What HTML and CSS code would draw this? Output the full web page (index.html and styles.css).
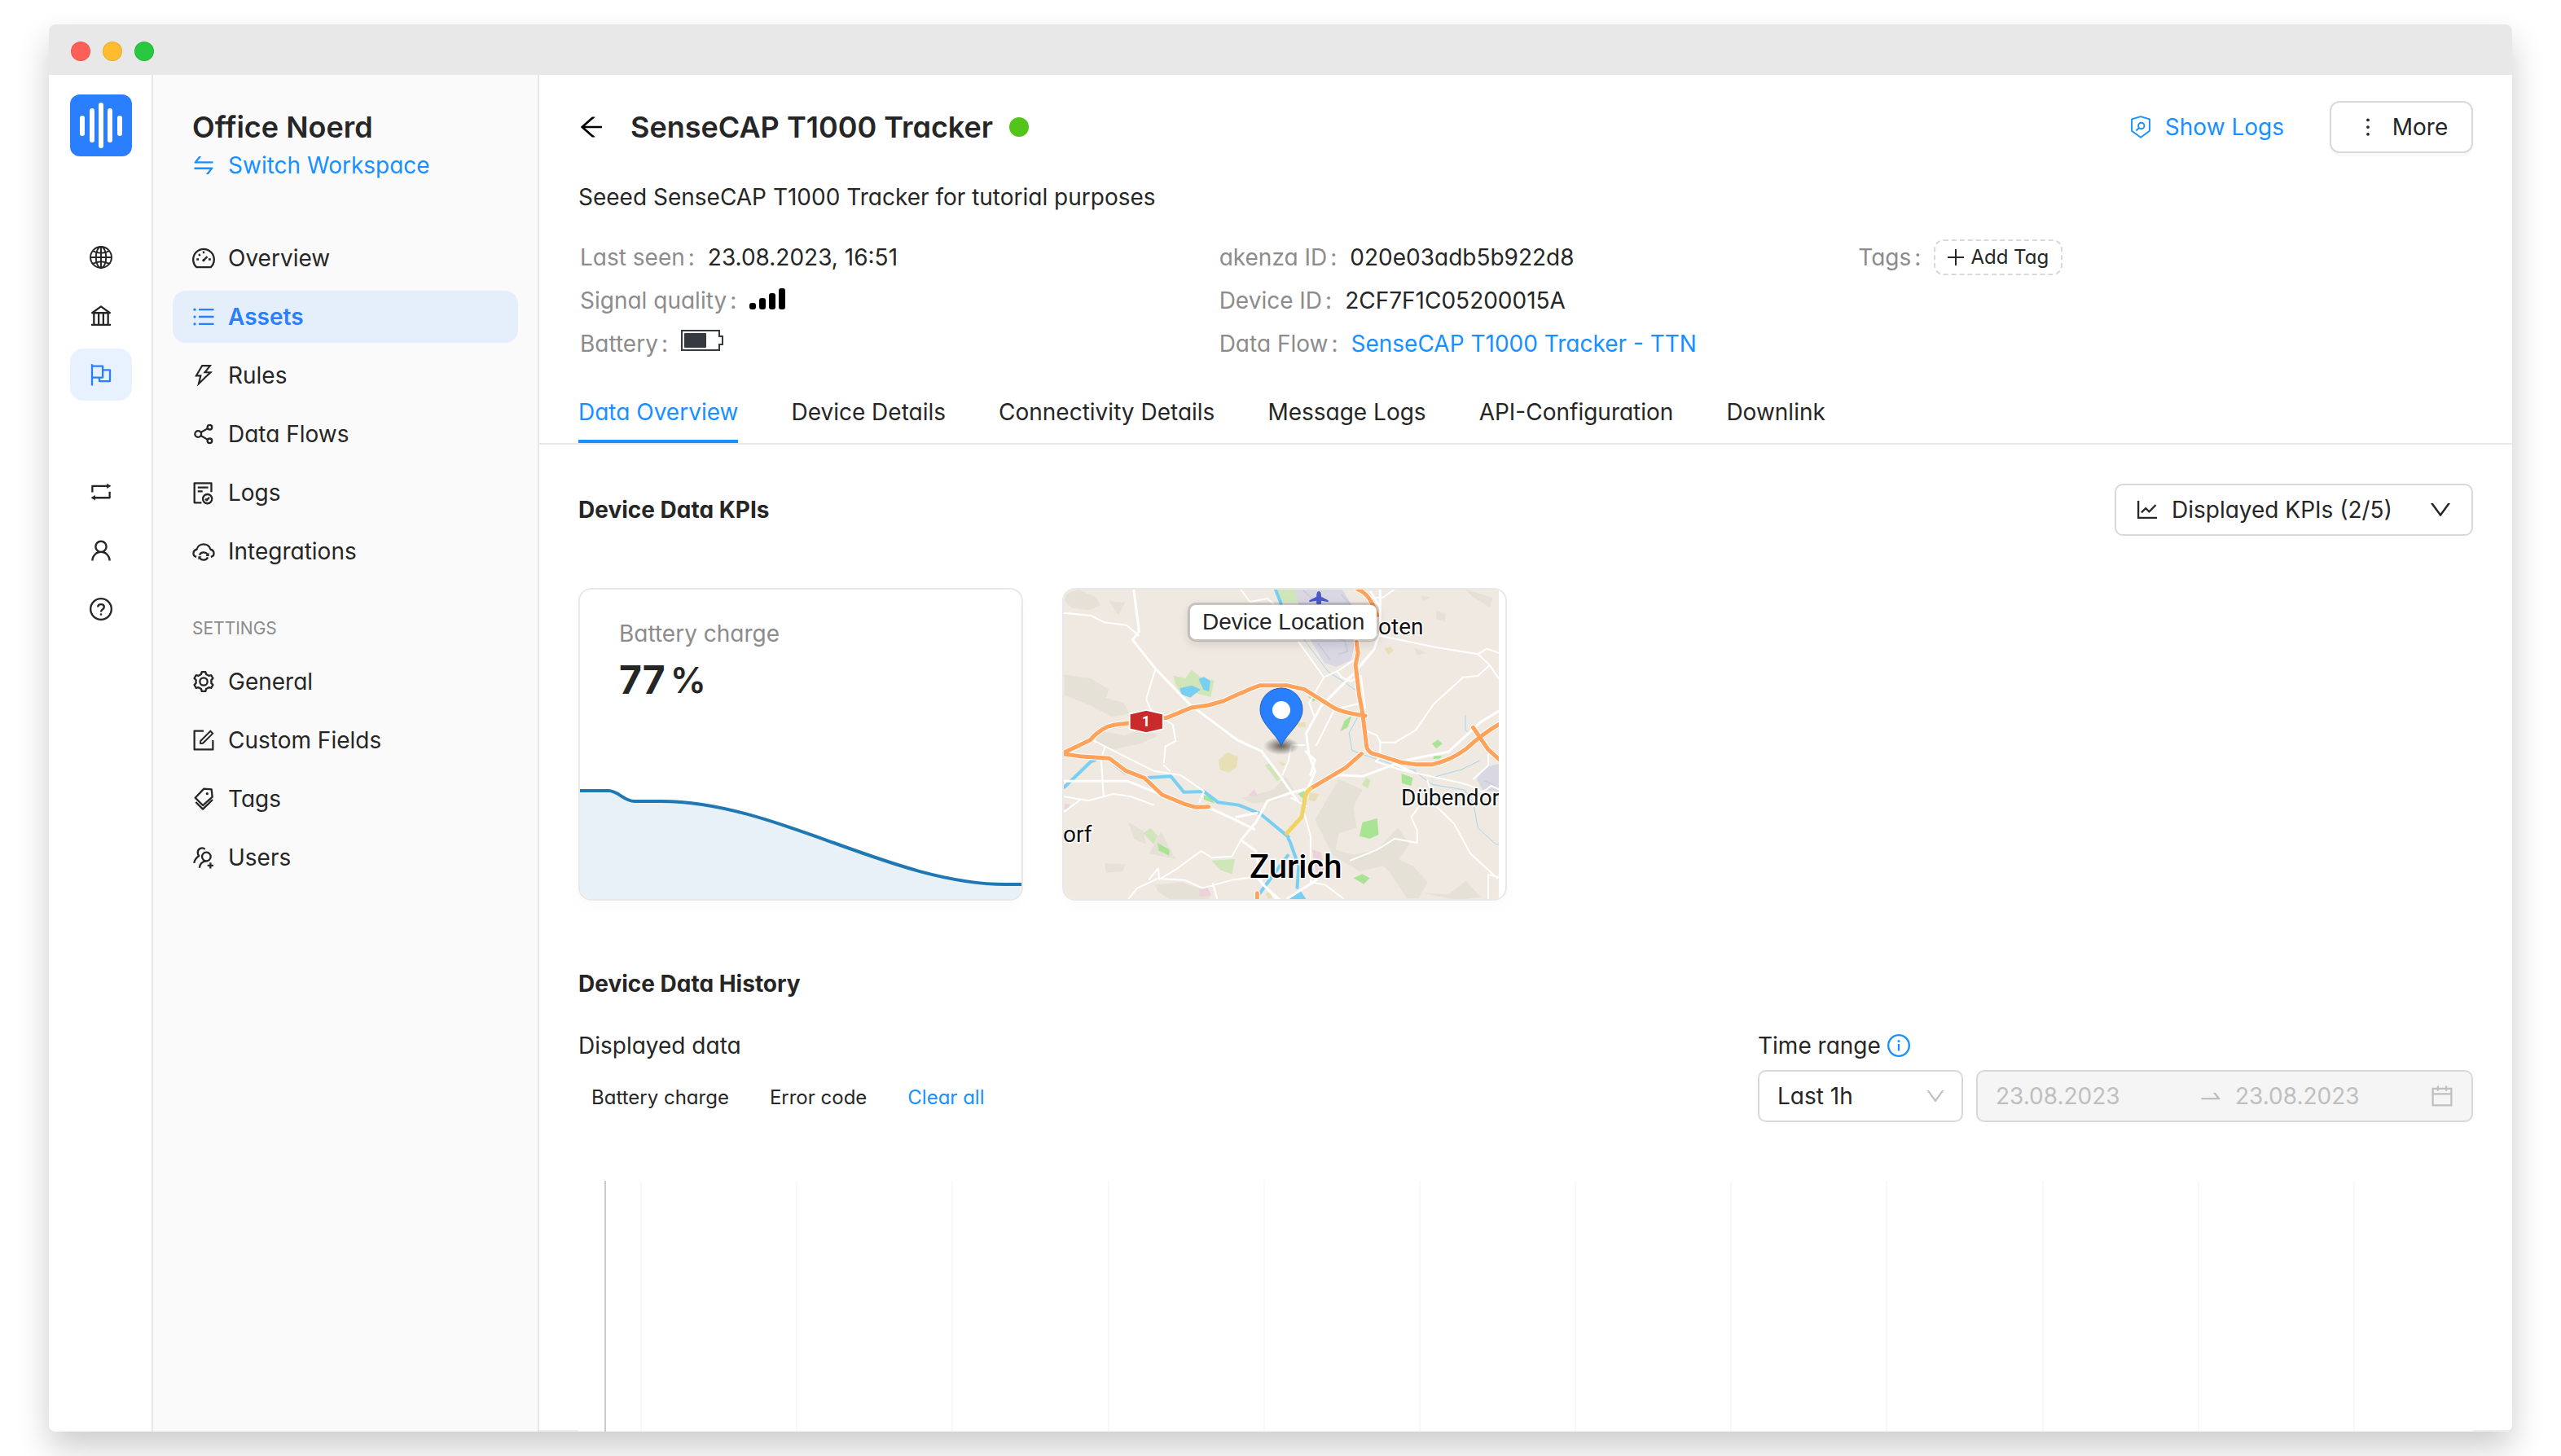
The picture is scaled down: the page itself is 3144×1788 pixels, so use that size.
FILE: index.html
```html
<!DOCTYPE html>
<html lang="en">
<head>
<meta charset="utf-8">
<title>SenseCAP T1000 Tracker</title>
<meta name="viewport" content="width=device-width, initial-scale=1">
<link rel="stylesheet" href="styles.css">
</head>
<body>
<div class="window">
  <div class="titlebar">
    <span class="light light-close"></span>
    <span class="light light-min"></span>
    <span class="light light-max"></span>
  </div>
  <div class="app">
    <nav class="rail" aria-label="Organization">
      <a class="logo" href="#" aria-label="Home">
        <svg viewBox="0 0 76 76" fill="none" stroke="#fff" stroke-width="6" stroke-linecap="round"><path d="M15 29v19M27 20v36M38 13v50M49 20v36M61 29v19"/></svg>
      </a>
      <a class="rail-item" href="#" aria-label="Public"><svg class="icon" viewBox="0 0 1024 1024"><g class="line thin"><circle cx="512" cy="512" r="415"/><ellipse cx="512" cy="512" rx="200" ry="415"/><path d="M512 97v830M97 512h830M185 260q327 170 654 0M185 764q327-170 654 0"/></g></svg></a>
      <a class="rail-item" href="#" aria-label="Organization"><svg class="icon" viewBox="0 0 1024 1024"><g class="line"><path d="M165 392L512 140l347 252zM235 400v440M420 400v440M604 400v440M789 400v440M125 860h774"/></g></svg></a>
      <a class="rail-item rail-active" href="#" aria-label="Workspaces"><svg class="icon" viewBox="0 0 1024 1024"><g class="line"><path d="M160 100v840M160 180h420v450H160M580 330h284v440H450V630"/></g></svg></a>
      <a class="rail-item rail-gap" href="#" aria-label="Switch"><svg class="icon" viewBox="0 0 1024 1024"><g class="line"><path d="M172 530V282h590M852 500v244H262"/></g><path d="M740 180l170 102-170 102zM284 642L114 744l170 102z"/></svg></a>
      <a class="rail-item" href="#" aria-label="Profile"><svg class="icon" viewBox="0 0 1024 1024"><path d="M858.5 763.6a374 374 0 00-80.6-119.5 375.63 375.63 0 00-119.5-80.6c-.4-.2-.8-.3-1.2-.5C719.5 518 760 444.7 760 362c0-137-111-248-248-248S264 225 264 362c0 82.700 40.500 156 102.800 201.100-.4.2-.8.3-1.200.5-44.800 18.900-85 46-119.500 80.600a375.630 375.630 0 00-80.600 119.500A371.700 371.700 0 00136 901.800a8 8 0 008 8.200h60c4.400 0 7.900-3.500 8-7.800 2-77.200 33-149.500 87.800-204.300 56.700-56.700 132-87.900 212.200-87.900s155.500 31.200 212.200 87.900C779 752.700 810 825 812 902.200c.1 4.400 3.600 7.800 8 7.800h60a8 8 0 008-8.200c-1-47.800-10.900-94.300-29.500-138.200zM512 534c-45.900 0-89.100-17.900-121.600-50.400S340 407.900 340 362c0-45.900 17.900-89.100 50.400-121.600S466.100 190 512 190s89.100 17.900 121.600 50.400S684 316.100 684 362c0 45.900-17.900 89.100-50.400 121.600S557.900 534 512 534z"/></svg></a>
      <a class="rail-item" href="#" aria-label="Help"><svg class="icon" viewBox="0 0 1024 1024"><g class="line"><circle cx="512" cy="512" r="410"/><path d="M390 430c0-140 244-140 244 0 0 100-122 90-122 190"/></g><circle cx="512" cy="722" r="40"/></svg></a>
    </nav>

    <aside class="sidebar">
      <div class="workspace">
        <h2 class="workspace-name">Office Noerd</h2>
        <a class="link switch" href="#"><svg class="icon" viewBox="0 0 1024 1024"><path d="M847.900 592H152c-4.400 0-8 3.600-8 8v60c0 4.400 3.600 8 8 8h605.200L612.900 851c-4.100 5.200-.4 13 6.300 13h72.500c4.900 0 9.500-2.200 12.600-6.100l168.800-214.100c16.500-21 1.600-51.800-25.200-51.800zM872 356H266.800l144.300-183c4.100-5.200.4-13-6.300-13h-72.500c-4.900 0-9.500 2.200-12.600 6.100L150.900 380.200c-16.500 21-1.600 51.800 25.100 51.800h696c4.400 0 8-3.600 8-8v-60c0-4.400-3.600-8-8-8z"/></svg>Switch Workspace</a>
      </div>
      <nav class="menu" aria-label="Workspace">
        <a class="menu-item" href="#"><svg class="icon" viewBox="0 0 1024 1024"><g class="line"><path d="M235 870a410 410 0 1 1 554 0zM505 600l150-150M512 240v90M230 560h90M704 560h90M318 356l60 60"/></g><circle cx="508" cy="598" r="52"/></svg>Overview</a>
        <a class="menu-item menu-active" href="#" aria-current="page"><svg class="icon" viewBox="0 0 1024 1024"><g class="line"><path d="M320 228h592M320 512h592M320 796h592"/></g><circle cx="160" cy="228" r="52"/><circle cx="160" cy="512" r="52"/><circle cx="160" cy="796" r="52"/></svg>Assets</a>
        <a class="menu-item" href="#"><svg class="icon" viewBox="0 0 1024 1024"><path d="M848 359.300H627.700L825.800 109c4.100-5.300.4-13-6.300-13H436c-2.800 0-5.500 1.500-6.900 4L170 547.500c-3.100 5.300.7 12 6.900 12h174.400l-89.400 357.600c-1.900 7.800 7.500 13.300 13.300 7.700L853.500 373c5.200-4.900 1.700-13.700-5.500-13.700zM378.200 732.500l60.300-241H281.100l189.600-327.400h224.600L487 427.400h211L378.200 732.500z"/></svg>Rules</a>
        <a class="menu-item" href="#"><svg class="icon" viewBox="0 0 1024 1024"><g class="line"><circle cx="295" cy="512" r="124"/><circle cx="750" cy="246" r="90"/><circle cx="750" cy="778" r="90"/><path d="M402 450l270-158M402 574l270 158"/></g></svg>Data Flows</a>
        <a class="menu-item" href="#"><svg class="icon" viewBox="0 0 1024 1024"><g class="line"><path d="M430 905H150V140h665v350M280 309h410M280 459h190"/><circle cx="661" cy="755" r="180"/><path d="M580 755l56 56 100-112"/></g></svg>Logs</a>
        <a class="menu-item" href="#"><svg class="icon" viewBox="0 0 1024 1024"><g class="line"><path d="M230 735C70 700 70 480 240 440 300 170 724 170 784 440 954 480 954 700 794 735M350 660c50-130 250-140 320-10M674 750c-50 130-250 140-320 10"/></g><path d="M724 560v140H590zM300 850V710h134z"/></svg>Integrations</a>
        <h3 class="menu-title">SETTINGS</h3>
        <a class="menu-item" href="#"><svg class="icon" viewBox="0 0 1024 1024"><g class="line"><circle cx="512" cy="512" r="150"/><path d="M414 222l26-92h144l26 92 104 60 93-23 72 124-67 69v120l67 69-72 124-93-23-104 60-26 92H440l-26-92-104-60-93 23-72-124 67-69V452l-67-69 72-124 93 23z"/></g></svg>General</a>
        <a class="menu-item" href="#"><svg class="icon" viewBox="0 0 1024 1024"><path d="M904 512h-56c-4.400 0-8 3.600-8 8v320H184V184h320c4.400 0 8-3.600 8-8v-56c0-4.400-3.600-8-8-8H144c-17.700 0-32 14.300-32 32v736c0 17.700 14.300 32 32 32h736c17.700 0 32-14.300 32-32V520c0-4.400-3.600-8-8-8z"/><path d="M355.900 534.900L354 653.800c-.1 8.900 7.100 16.200 16 16.200h.4l118-2.900c2-.1 4-.9 5.400-2.300l415.900-415c3.100-3.100 3.100-8.200 0-11.300L785.400 114.300c-1.600-1.600-3.600-2.300-5.700-2.300s-4.100.8-5.700 2.300l-415.800 415a8.300 8.300 0 00-2.300 5.600zm63.500 23.600L779.700 199l45.200 45.100-360.500 359.700-45.700 1.100.7-46.400z"/></svg>Custom Fields</a>
        <a class="menu-item" href="#"><svg class="icon" viewBox="0 0 1024 1024"><g class="line"><path d="M181 470L523 117l298 22 32 298-373 332zM203 640l277 278 384-374"/></g><circle cx="650" cy="310" r="52"/></svg>Tags</a>
        <a class="menu-item" href="#"><svg class="icon" viewBox="0 0 1024 1024"><g class="line"><circle cx="619" cy="480" r="170"/><path d="M350 920c10-140 100-250 260-270M565 190C470 90 270 150 280 330c0 60 20 90 50 120C230 520 150 610 140 730M779 710v230M664 825h230"/></g></svg>Users</a>
      </nav>
    </aside>

    <main class="main">
      <header class="page-header">
        <div class="title-row">
          <button class="back" type="button" aria-label="Back"><svg class="icon icon-lg" viewBox="0 0 1024 1024"><path d="M872 474H286.900l350.200-304c5.600-4.900 2.200-14-5.200-14h-88.500c-3.900 0-7.600 1.400-10.500 3.900L155 487.800a31.960 31.960 0 000 48.300L535.100 866c1.500 1.300 3.300 2 5.200 2h91.500c7.400 0 10.800-9.200 5.200-14L286.900 550H872c4.400 0 8-3.600 8-8v-60c0-4.400-3.600-8-8-8z"/></svg></button>
          <h1 class="title">SenseCAP T1000 Tracker</h1>
          <span class="status" role="img" aria-label="Online"></span>
          <div class="actions">
            <a class="link show-logs" href="#"><svg class="icon" viewBox="0 0 1024 1024"><g class="line thin"><path d="M512 100l350 105v460L512 922 162 665V205z"/><circle cx="536" cy="462" r="118"/><path d="M450 546l-116 112"/></g></svg>Show Logs</a>
            <button class="btn more" type="button"><svg class="icon" viewBox="0 0 1024 1024"><circle cx="512" cy="232" r="60"/><circle cx="512" cy="512" r="60"/><circle cx="512" cy="792" r="60"/></svg>More</button>
          </div>
        </div>
        <p class="description">Seeed SenseCAP T1000 Tracker for tutorial purposes</p>
        <div class="facts">
          <dl class="fact-list">
            <div class="fact"><dt>Last seen</dt><dd>23.08.2023, 16:51</dd></div>
            <div class="fact"><dt>Signal quality</dt><dd><svg class="signal" viewBox="0 0 44 26" role="img" aria-label="Excellent"><rect y="18" width="8" height="8" rx="3"/><rect x="12" y="12" width="8" height="14" rx="3"/><rect x="24" y="6" width="8" height="20" rx="3"/><rect x="36" width="8" height="26" rx="3"/></svg></dd></div>
            <div class="fact"><dt>Battery</dt><dd><svg class="battery" viewBox="0 0 52 26" role="img" aria-label="77 percent"><path d="M1 1h46v7h4v10h-4v7H1z" fill="none" stroke="#343a40" stroke-width="2"/><rect x="4" y="4" width="27" height="18" rx="1" fill="#343a40"/></svg></dd></div>
          </dl>
          <dl class="fact-list">
            <div class="fact"><dt>akenza ID</dt><dd>020e03adb5b922d8</dd></div>
            <div class="fact"><dt>Device ID</dt><dd>2CF7F1C05200015A</dd></div>
            <div class="fact"><dt>Data Flow</dt><dd><a class="link" href="#">SenseCAP T1000 Tracker - TTN</a></dd></div>
          </dl>
          <dl class="fact-list">
            <div class="fact"><dt>Tags</dt><dd><button class="add-tag" type="button"><svg viewBox="0 0 20 20" fill="none" stroke="currentColor" stroke-width="2"><path d="M10 0v20M0 10h20"/></svg>Add Tag</button></dd></div>
          </dl>
        </div>
      </header>
      <nav class="tabs" aria-label="Device">
        <a class="tab tab-active" href="#" aria-current="page">Data Overview</a>
        <a class="tab" href="#">Device Details</a>
        <a class="tab" href="#">Connectivity Details</a>
        <a class="tab" href="#">Message Logs</a>
        <a class="tab" href="#">API-Configuration</a>
        <a class="tab" href="#">Downlink</a>
      </nav>

      <section class="kpis">
        <div class="section-head">
          <h2 class="section-title">Device Data KPIs</h2>
          <div class="select kpi-select">
            <svg class="icon select-lead" viewBox="0 0 1024 1024"><path d="M888 792H200V168c0-4.400-3.600-8-8-8h-56c-4.400 0-8 3.600-8 8v688c0 4.400 3.600 8 8 8h752c4.400 0 8-3.600 8-8v-56c0-4.400-3.600-8-8-8zM305.800 637.700c3.100 3.100 8.100 3.100 11.300 0l138.300-137.600L583 628.500c3.100 3.100 8.200 3.100 11.300 0l275.400-275.300c3.100-3.100 3.100-8.200 0-11.300l-39.600-39.600a8.030 8.030 0 00-11.300 0l-230 229.900L461.400 404a8.030 8.030 0 00-11.300 0L266.300 586.700a8.030 8.030 0 000 11.300l39.500 39.700z"/></svg>
            <select aria-label="Displayed KPIs"><option>Displayed KPIs (2/5)</option></select>
            <svg class="icon select-arrow" viewBox="0 0 1024 1024"><path d="M884 256h-75c-5.100 0-9.900 2.500-12.900 6.600L512 654.200 227.900 262.600c-3-4.100-7.800-6.600-12.900-6.600h-75c-6.500 0-10.300 7.400-6.500 12.700l352.600 486.100c12.800 17.600 39 17.600 51.700 0l352.600-486.100c3.900-5.300.1-12.700-6.400-12.700z"/></svg>
          </div>
        </div>
        <div class="cards">
          <article class="card charge">
            <div class="charge-text">
              <h3 class="charge-label">Battery charge</h3>
              <p class="charge-value">77<span class="charge-unit">%</span></p>
            </div>
            <svg class="spark" viewBox="0 0 542 136" preserveAspectRatio="none"><path d="M0 3H35C47 3 54 16 67 16H100C241 16 382 118 523 118H542V136H0z" fill="#e8f0f8"/><path d="M0 3H35C47 3 54 16 67 16H100C241 16 382 118 523 118H542" fill="none" stroke="#1f78b4" stroke-width="4"/></svg>
          </article>
          <article class="card location">
            <svg class="map" viewBox="0 0 534 380" role="img" aria-label="Map of Zurich">
              <rect width="534" height="380" fill="#efe9e1"/>
              <g transform="scale(.3636 .3333) translate(-42 -42)">
                <g fill="#e5e1d6">
                  <path d="M50 60L90 42 150 70 165 100 130 118 70 110 44 80zM195 85l55 5-25 45zM44 355l90 15 60 40-10 30 60 20 20 40-60 10-70-40-90-40zM150 560l100 20 60-30 50 30-60 30-90 20-60-20zM640 810l110-30 40-50 30 50-60 40-80 10zM890 890l80-150 80 40-30 60 10 80-60 20-10 60 60 20 80-20 70-80 40 60-50 70-120 30-90-60zM1100 1000l120 60 50 60-30 60h-40l-60-100-60-60zM350 1130l90-10 100 40-10 25h-130l-40-30zM260 900l50 30 10 50-40-20zM180 1050l70 5-10 25-55 5zM330 1015l40-80 50 100zM1400 42l90 30-10 35-60-40zM1300 120l30 10v30l-30-10zM1225 255l40 20-30 10zM1250 65l30 5-25 15zM1250 1160l90 5 60-50 50 60-80 10z"/>
                </g>
                <g fill="#d0e6b8"><path d="M412 360l40 8 22-30 28 25 48 15-12 60-35-10-30-10-35 10-20-40zM755 42h70l15 45h-70zM540 1040l80-5-10 55-40-15zM310 940l25-20 25 30-15 30zM1048 760l15-25 15 10-10 30zM722 690l20-12 35 60-15 10z"/></g>
                <g fill="#a9e495"><path d="M358 975l40 25v22l-35-18zM1040 950l10-50 50-15 5 60-30 15zM1182 720l38 15-5 30-32-10zM975 565l15-40 25-20-15 45zM1285 610l20-15 15 15-20 18zM865 435l30 10-10 10zM1020 1105l30-15 25 15-20 22zM515 800l25 5 10 25-35-15zM833 795l22-12-5 30zM1290 655h30l-10 10h-20z"/></g>
                <g fill="#e7dfb5"><path d="M565 670l30-28 35 15-5 40-25 20-32-12zM870 790l35 5-15 28-20-5zM830 535l28-5v18h-25zM1125 260l20-8 10 15-18 15zM765 675l25 8-8 10zM725 1160l20-10v30h-15z"/></g>
                <g fill="#d8d7e2"><path d="M822 42h160l35 60 20 80-25 120-50 25-40-15-45-80-25-60zM1436 740l30-45 45-10v105l-55-10z"/></g>
                <g fill="none" stroke="#c8c8dc" stroke-width="4"><path d="M850 45l60 60M920 210l70 20 10 40-30 10M900 240l40 60M980 60l30 40M1460 745l40 20"/></g>
                <g fill="#ebd2dc"><path d="M664 800l22-22 12 28zM500 1145l25-10 15 35-40 2zM44 832h20l-10 20h-10zM880 1000l30 10 15 60-30 20z"/></g>
                <g fill="#78cff2"><path d="M434 405l40-10 30 15-35 30-30-12zM497 372l18-8 22 15-5 38-18-5zM790 1182l50-32 20 32z"/></g>
                <g class="road water"><path d="M44 770l90-95 14-5M328 735l75-5 44 58 68-2 48 40 70 10 72 32 95 85M830 1140l5-80-30-90-5-10M798 1022l-95 140M757 42l18 50"/></g>
                <g class="road stream"><path d="M845 215l90 130 50 35 45 35M1035 510l-30 60 10 65 45 18 140 50 30 5M1225 710l60 50 110 20 30 50 15 90 60 60h30M1285 735l100-30 60-32M1398 505v55l15 10M210 690l40 35"/></g>
                <g class="road minor">
                  <path d="M44 128l90 10 45 25 75 10 40 38M44 805l80 15 85-25 60 10 75 30M44 860l50-40M180 625l-12 40 8 135M145 600l90 50 110 60 90 15 80 60-15 40M380 690l20 20M350 340l-30 105 15 40 75 55 10 60-35 20-5 60M640 42l30 45 60-12 20 20M835 235l85 130-50 95 20 55M920 365l50-25 60-45M965 345l15 20 30 15 35-20 15 120M1045 460l-90 25-60 130M1100 210l200 45 140 25 40 40 30 50M1440 280l30-20 40 15M1480 320l-40 40-50 5-100 100-60 95-70 45h-50l-10-25-50-25M1110 600v60l-15 15 80 30 210 50 30 10 40 25 30-25 40 20M1270 745l10 40-65 95 20 50v45l-75-15-60 40-90 40M1290 830l70 75 55 110 90 90M1475 1182v-90l35 10M1475 650v40l-50 50M855 870l20 80v110M855 615h-45l-10 60-20 50M810 810l50 30M975 1050l-90-10-10 80 50 10 60 50M260 1182l30-40 70-35 90 5 60 30 100-30 70-10M540 1030l70-5 30-60M535 1025l-30-20-80 65-60 40-5-40-30 40M545 1125l15 57M1158 42l-40 30-40 0"/>
                </g>
                <g class="road major">
                  <path d="M278 42l18 155-22 30 80 110 115 130 160 130 80 40 55 80 65 100M44 748h215l95 42 90 40M530 845l90 45 65 35M625 880l70-15M1110 42v150l-20 70-70 90-110 120-50 100 10 80 20 60-30 80M1078 50l30 55M870 775l-60 15-80 30-40 80-50 65 50 40 20 120 60 60M870 775l100-50 80 5 110-45 60 30M1200 670l140-30 110-110 60-40M860 640l30 30-15 55M795 1182l100-70M700 1110l60 72"/>
                </g>
                <g class="road case"><path d="M44 642l86-45q40-48 80-56l90-12 90-15 80-36 60-10 50-15q100-50 125-58h90l60 15 95 65q30 20 110 32M44 648l50 8 102 8 56 46 62 26 60 62 75 34 40 12 42-2M1035 42q40 15 65 95M1030 235l5 40-8 45 12 110 12 70 12 110q2 35 35 40l80 28 50 8h60q60-15 110-55 60-60 112-92M1424 550l50 80 38 38M875 775l120-78 52-50M695 1160v22"/></g>
                <g class="road motorway"><path d="M44 642l86-45q40-48 80-56l90-12 90-15 80-36 60-10 50-15q100-50 125-58h90l60 15 95 65q30 20 110 32M44 648l50 8 102 8 56 46 62 26 60 62 75 34 40 12 42-2M1035 42q40 15 65 95M1030 235l5 40-8 45 12 110 12 70 12 110q2 35 35 40l80 28 50 8h60q60-15 110-55 60-60 112-92M1424 550l50 80 38 38M875 775l120-78 52-50M695 1160v22"/></g>
                <path class="road trunk" d="M875 775q-18 12-20 45l-10 60-50 60"/>
                <path d="M903 48q8 0 8 20l24 14v6l-24-5v12h-16V83l-24 5v-6l24-14q0-20 8-20z" fill="#4a58c8"/>
                <path d="M264 500l56-14 57 14v56l-57 14-56-14z" fill="#c92a2a" stroke="#fff" stroke-width="5"/>
              </g>
              <g class="place">
                <text x="386" y="55">oten</text>
                <text x="414" y="265">Dübendorf</text>
                <text x="-1" y="310">orf</text>
                <text class="city" x="228" y="354">Zurich</text>
              </g>
              <text class="shield-no" x="101" y="168">1</text>
              <defs><radialGradient id="shade"><stop offset="0" stop-opacity=".6"/><stop offset="1" stop-opacity="0"/></radialGradient></defs>
              <ellipse cx="267" cy="192" rx="22" ry="11" fill="url(#shade)"/>
              <path d="M267 191C258 174 241 164 241 147a26 26 0 0 1 52 0C293 164 276 174 267 191z" fill="#2a7fff" stroke="#1f5fc0" stroke-width="1"/>
              <circle cx="267" cy="148" r="11" fill="#fff"/>
            </svg>
            <span class="map-tip">Device Location</span>
          </article>
        </div>
      </section>

      <section class="history">
        <h2 class="section-title">Device Data History</h2>
        <div class="filters">
          <div class="series">
            <h3 class="field-label">Displayed data</h3>
            <div class="series-list">
              <button class="series-btn" type="button">Battery charge</button>
              <button class="series-btn" type="button">Error code</button>
              <button class="series-btn series-clear" type="button">Clear all</button>
            </div>
          </div>
          <div class="range">
            <label class="field-label" for="range">Time range<svg class="icon info" viewBox="0 0 1024 1024"><g class="line"><circle cx="512" cy="512" r="410"/><path d="M512 448v272"/></g><circle cx="512" cy="336" r="48"/></svg></label>
            <div class="range-row">
              <div class="select time-select">
                <select id="range"><option>Last 1h</option></select>
                <svg class="icon select-arrow" viewBox="0 0 1024 1024"><path d="M884 256h-75c-5.100 0-9.900 2.500-12.900 6.600L512 654.200 227.900 262.600c-3-4.100-7.800-6.600-12.900-6.600h-75c-6.500 0-10.300 7.400-6.500 12.700l352.600 486.100c12.800 17.600 39 17.600 51.700 0l352.600-486.100c3.900-5.300.1-12.700-6.400-12.700z"/></svg>
              </div>
              <div class="dates">
                <input class="date-start" type="text" value="23.08.2023" aria-label="Start date" disabled>
                <svg class="icon" viewBox="0 0 1024 1024"><path d="M873.100 596.200l-164-208A32 32 0 00684 376h-64.800c-6.700 0-10.400 7.700-6.300 13l144.300 183H152c-4.400 0-8 3.600-8 8v60c0 4.400 3.600 8 8 8h695.900c26.800 0 41.700-30.800 25.200-51.800z"/></svg>
                <input class="date-end" type="text" value="23.08.2023" aria-label="End date" disabled>
                <svg class="icon" viewBox="0 0 1024 1024"><path d="M880 184H712v-64c0-4.400-3.600-8-8-8h-56c-4.400 0-8 3.600-8 8v64H384v-64c0-4.400-3.600-8-8-8h-56c-4.400 0-8 3.600-8 8v64H144c-17.700 0-32 14.300-32 32v664c0 17.700 14.300 32 32 32h736c17.700 0 32-14.300 32-32V216c0-17.700-14.300-32-32-32zm-40 656H184V460h656v380zM184 392V256h128v48c0 4.400 3.600 8 8 8h56c4.400 0 8-3.600 8-8v-48h256v48c0 4.400 3.600 8 8 8h56c4.400 0 8-3.600 8-8v-48h128v136H184z"/></svg>
              </div>
            </div>
          </div>
        </div>
        <div class="plot">
          <div class="plot-grid"><i></i><i></i><i></i><i></i><i></i><i></i><i></i><i></i><i></i><i></i><i></i><i></i></div>
        </div>
      </section>
    </main>
  </div>
</div>
</body>
</html>
```
FILE: styles.css
```css
:root {
  --text: #262626;
  --muted: #8c8c8c;
  --link: #1890ff;
  --primary: #2a7fff;
  --line: #e8e8e8;
  --border: #d9d9d9;
}

* { box-sizing: border-box; }

body {
  margin: 0;
  height: 100vh;
  padding: 30px 60px;
  background: #fff;
  color: var(--text);
  font: 400 28px/44px Inter, "Liberation Sans", sans-serif;
  font-feature-settings: "cv11";
  overflow: hidden;
}

h1, h2, h3, p, dl, dd { margin: 0; font-weight: inherit; font-size: inherit; }
a { color: inherit; text-decoration: none; }
button, select, input { font: inherit; font-feature-settings: inherit; color: inherit; margin: 0; padding: 0; border: 0; background: none; }

.icon { display: block; flex: none; width: 32px; height: 32px; fill: currentColor; }
.icon-lg { width: 36px; height: 36px; }
.line { fill: none; stroke: currentColor; stroke-width: 74; stroke-linejoin: round; }
.thin { stroke-width: 62; }
.link { color: var(--link); }

/* Window frame */
.window {
  display: flex;
  flex-direction: column;
  height: 100%;
  border-radius: 8px;
  overflow: hidden;
  background: #fff;
  box-shadow: 0 20px 40px rgba(0, 0, 0, .2);
}
.titlebar { display: flex; align-items: center; gap: 15px; flex: none; height: 62px; padding: 3px 27px 0; background: #e8e8e8; }
.light { width: 24px; height: 24px; border-radius: 50%; border: 1px solid rgba(0, 0, 0, .08); }
.light-close { background: #ff5f57; }
.light-min { background: #febc2e; }
.light-max { background: #28c840; }
.app { display: flex; flex: 1; min-height: 0; }

/* Icon rail */
.rail { display: flex; flex-direction: column; gap: 8px; flex: none; width: 128px; padding: 24px 24px 24px 26px; border-right: 2px solid var(--line); }
.logo { height: 76px; margin-bottom: 84px; border-radius: 12px; background: var(--primary); }
.logo svg { display: block; width: 100%; height: 100%; }
.rail-item { display: flex; align-items: center; justify-content: center; height: 64px; border-radius: 16px; }
.rail-active { color: var(--primary); background: #e8f2ff; }
.rail-gap { margin-top: 72px; }

/* Workspace sidebar */
.sidebar { flex: none; width: 474px; padding: 40px 24px; background: #fafafa; border-right: 2px solid var(--line); }
.workspace { padding: 0 24px 0 22px; }
.workspace-name { padding-left: 2px; font-weight: 600; font-size: 36px; line-height: 48px; }
.switch { display: flex; align-items: center; gap: 14px; margin-top: 1px; }
.menu { display: flex; flex-direction: column; gap: 8px; margin-top: 60px; }
.menu-item { display: flex; align-items: center; gap: 14px; height: 64px; padding: 0 22px; border-radius: 16px; }
.menu-active { color: var(--primary); background: #e5eefb; font-weight: 600; }
.menu-title { margin: 31px 24px 2px; font-size: 21px; line-height: 47px; color: var(--muted); }

/* Page header */
.main { display: flex; flex-direction: column; flex: 1; min-width: 0; border-bottom: 2px solid #f0f0f0; }
.page-header { padding: 32px 48px 0; }
.title-row { display: flex; align-items: center; height: 64px; }
.back { margin: 0 30px 0 -2px; cursor: pointer; color: #000; }
.title { font-weight: 600; font-size: 36px; }
.status { width: 24px; height: 24px; margin-left: 20px; border-radius: 50%; background: #52c41a; }
.actions { display: flex; align-items: center; gap: 56px; margin-left: auto; }
.show-logs { display: flex; align-items: center; gap: 14px; }
.btn { border: 2px solid var(--border); border-radius: 12px; background: #fff; box-shadow: 0 4px 0 rgba(0, 0, 0, .02); cursor: pointer; }
.more { display: flex; align-items: center; justify-content: center; gap: 14px; width: 176px; height: 64px; }
.description { margin-top: 32px; }
.facts { display: grid; grid-template-columns: repeat(3, 1fr); gap: 28px; margin-top: 30px; }
.fact-list { display: flex; flex-direction: column; gap: 9px; padding-left: 2px; }
.fact { display: flex; align-items: center; height: 44px; }
.fact dt { color: var(--muted); }
.fact dt::after { content: ":"; margin: 0 16px 0 4px; }
.signal { display: block; width: 44px; height: 26px; margin-bottom: 4px; }
.battery { display: block; width: 52px; height: 26px; margin-bottom: 8px; }
.add-tag { display: flex; align-items: center; gap: 8px; height: 44px; padding: 0 15px; border: 2px dashed var(--border); border-radius: 12px; font-size: 24px; cursor: pointer; }
.add-tag svg { width: 20px; height: 20px; }

.tabs { display: flex; gap: 65px; margin-top: 40px; padding: 0 48px; border-bottom: 2px solid var(--line); }
.tab { padding-bottom: 12px; border-bottom: 4px solid transparent; }
.tab-active { color: var(--link); border-color: var(--link); }

/* KPI cards */
.kpis { padding: 48px 48px 0; }
.section-head { display: flex; align-items: center; justify-content: space-between; }
.section-title { font-weight: 700; }
.select { position: relative; height: 64px; border: 2px solid var(--border); border-radius: 10px; background: #fff; }
.select select { appearance: none; width: 100%; height: 100%; cursor: pointer; }
.select-lead { position: absolute; left: 22px; top: 14px; pointer-events: none; }
.select-arrow { position: absolute; right: 22px; top: 14px; pointer-events: none; }
.kpi-select { width: 440px; }
.kpi-select select { padding-left: 68px; }
.time-select { width: 252px; }
.time-select select { padding-left: 22px; }
.time-select .select-arrow { width: 28px; height: 28px; right: 18px; top: 16px; color: #bfbfbf; }
.cards { display: flex; gap: 48px; margin-top: 64px; }
.card { position: relative; width: 546px; height: 384px; border: 2px solid var(--line); border-radius: 16px; background: #fff; overflow: hidden; box-shadow: 0 8px 24px rgba(0, 0, 0, .02); }
.charge { display: flex; flex-direction: column; justify-content: space-between; }
.charge-text { padding: 32px 48px; }
.charge-label { color: var(--muted); }
.charge-value { display: flex; gap: 6px; margin-top: 3px; font-weight: 700; font-size: 48px; line-height: 64px; }
.charge-unit { font-size: 44px; font-weight: 600; }
.spark { display: block; width: 100%; height: 136px; }

.map { display: block; width: 534px; height: 380px; }
.road { fill: none; stroke-linecap: round; stroke-linejoin: round; }
.road path, path.road { vector-effect: non-scaling-stroke; }
.minor { stroke: #fff; stroke-width: 2; }
.major { stroke: #fff; stroke-width: 3; }
.water { stroke: #78cff2; stroke-width: 4; }
.stream { stroke: #a5d5ec; stroke-width: 1; }
.case { stroke: #fff; stroke-width: 7; }
.motorway { stroke: #ffa25c; stroke-width: 5; }
.trunk { stroke: #f2d262; stroke-width: 5; }
.place { font: 400 28px Roboto, sans-serif; fill: #111; stroke: #fff; stroke-width: 3; paint-order: stroke; }
.city { font-weight: 500; font-size: 40px; fill: #000; }
.shield-no { font: 700 18px Roboto, sans-serif; fill: #fff; text-anchor: middle; }
.map-tip { position: absolute; left: 152px; top: 16px; padding: 0 15px; border: 3px solid rgba(0, 0, 0, .16); border-radius: 10px; background: #fff; background-clip: padding-box; box-shadow: 0 4px 12px rgba(0, 0, 0, .1); font: 28px/42px "Liberation Sans", Arial, sans-serif; white-space: nowrap; }

/* History */
.history { display: flex; flex-direction: column; flex: 1; min-height: 0; padding: 80px 48px 0; }
.filters { display: flex; justify-content: space-between; margin-top: 32px; }
.field-label { display: flex; align-items: center; gap: 6px; margin-bottom: 8px; }
.info { color: var(--link); }
.series-list { display: flex; align-items: center; gap: 18px; height: 64px; padding-top: 4px; }
.series-btn { padding: 0 16px; font-size: 24px; cursor: pointer; }
.series-clear { color: var(--link); }
.range-row { display: flex; gap: 16px; }
.dates { display: flex; align-items: center; width: 610px; height: 64px; padding: 0 20px 0 22px; border: 2px solid var(--border); border-radius: 10px; background: #f5f5f5; color: #bfbfbf; }
.dates input { min-width: 0; color: #bfbfbf; }
.date-start { flex: none; width: 248px; }
.date-end { flex: 1; margin-left: 14px; }
.plot { display: flex; flex: 1; position: relative; margin: 72px 0 -2px; padding-left: 32px; background: #fff; }
.plot-grid { display: grid; grid-template-columns: repeat(11, 13fr) 10fr; flex: 1; padding-left: 42px; border-left: 2px solid #ccc; }
.plot-grid i { border-left: 2px solid #f8f8f8; }
```
